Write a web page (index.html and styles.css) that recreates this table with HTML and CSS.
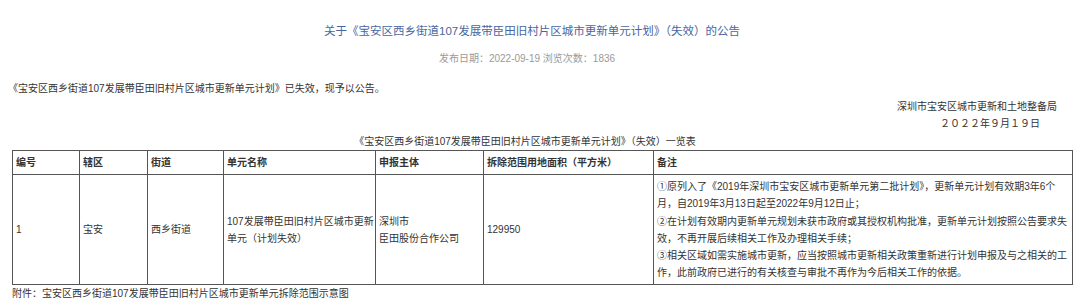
FILE: index.html
```html
<!DOCTYPE html>
<html lang="zh-CN">
<head>
<meta charset="utf-8">
<title>公告</title>
<link rel="stylesheet" href="styles.css">
</head>
<body>
<div class="page">
  <h1 class="title">关于《宝安区西乡街道107发展带臣田旧村片区城市更新单元计划》（失效）的公告</h1>
  <div class="meta">发布日期：2022-09-19 浏览次数：1836</div>
  <p class="intro">《宝安区西乡街道107发展带臣田旧村片区城市更新单元计划》已失效，现予以公告。</p>
  <p class="sign">深圳市宝安区城市更新和土地整备局</p>
  <p class="sign sign-date">２０２２年９月１９日</p>
  <p class="caption">《宝安区西乡街道107发展带臣田旧村片区城市更新单元计划》（失效）一览表</p>
  <table class="list">
    <colgroup>
      <col class="c1"><col class="c2"><col class="c3"><col class="c4"><col class="c5"><col class="c6"><col class="c7">
    </colgroup>
    <thead>
      <tr>
        <th>编号</th><th>辖区</th><th>街道</th><th>单元名称</th><th>申报主体</th><th>拆除范围用地面积（平方米）</th><th class="remark">备注</th>
      </tr>
    </thead>
    <tbody>
      <tr>
        <td>1</td>
        <td>宝安</td>
        <td>西乡街道</td>
        <td>107发展带臣田旧村片区城市更新单元（计划失效）</td>
        <td>深圳市<br>臣田股份合作公司</td>
        <td>129950</td>
        <td class="remark">
          <div>①原列入了《2019年深圳市宝安区城市更新单元第二批计划》，更新单元计划有效期3年6个月，自2019年3月13日起至2022年9月12日止；</div>
          <div>②在计划有效期内更新单元规划未获市政府或其授权机构批准，更新单元计划按照公告要求失效，不再开展后续相关工作及办理相关手续；</div>
          <div>③相关区域如需实施城市更新，应当按照城市更新相关政策重新进行计划申报及与之相关的工作，此前政府已进行的有关核查与审批不再作为今后相关工作的依据。</div>
        </td>
      </tr>
    </tbody>
  </table>
  <p class="note">附件：宝安区西乡街道107发展带臣田旧村片区城市更新单元拆除范围示意图</p>
</div>
</body>
</html>
```

FILE: styles.css
```css
html, body {
  margin: 0;
  padding: 0;
  background: #ffffff;
}

body {
  font-family: "Liberation Sans", "Noto Sans CJK SC", sans-serif;
  font-size: 10px;
  color: #333333;
}

.page {
  padding: 0 8px;
}

.title {
  margin: 21px 0 0;
  padding-right: 16px;
  font-size: 11.5px;
  font-weight: normal;
  line-height: 20px;
  text-align: center;
  color: #4a66a0;
}

.meta {
  margin-top: 9px;
  padding-right: 26px;
  font-size: 10px;
  line-height: 17.5px;
  text-align: center;
  color: #9a9a9a;
}

.intro {
  margin: 12.5px 0 0;
  line-height: 17.5px;
}

.sign {
  margin: 0;
  padding-right: 15px;
  line-height: 17.5px;
  text-align: right;
}

.sign-date {
  padding-right: 32px;
}

.caption {
  margin: 0;
  padding-right: 30px;
  line-height: 17.5px;
  text-align: center;
}

.list {
  margin-left: 4px;
  width: 1060px;
  border-collapse: collapse;
  table-layout: fixed;
}

.c1 { width: 67px; }
.c2 { width: 68px; }
.c3 { width: 76px; }
.c4 { width: 152px; }
.c5 { width: 108px; }
.c6 { width: 170px; }
.c7 { width: 419px; }

.list th,
.list td {
  border: 1px solid #555555;
  padding: 3px 1px 3px 3px;
  line-height: 17.2px;
  text-align: left;
  vertical-align: middle;
  color: #333333;
}

.list th {
  font-weight: bold;
}

.list .remark {
  padding-right: 4px;
}

.note {
  margin: 0;
  line-height: 17.5px;
  padding-left: 4px;
}
```
